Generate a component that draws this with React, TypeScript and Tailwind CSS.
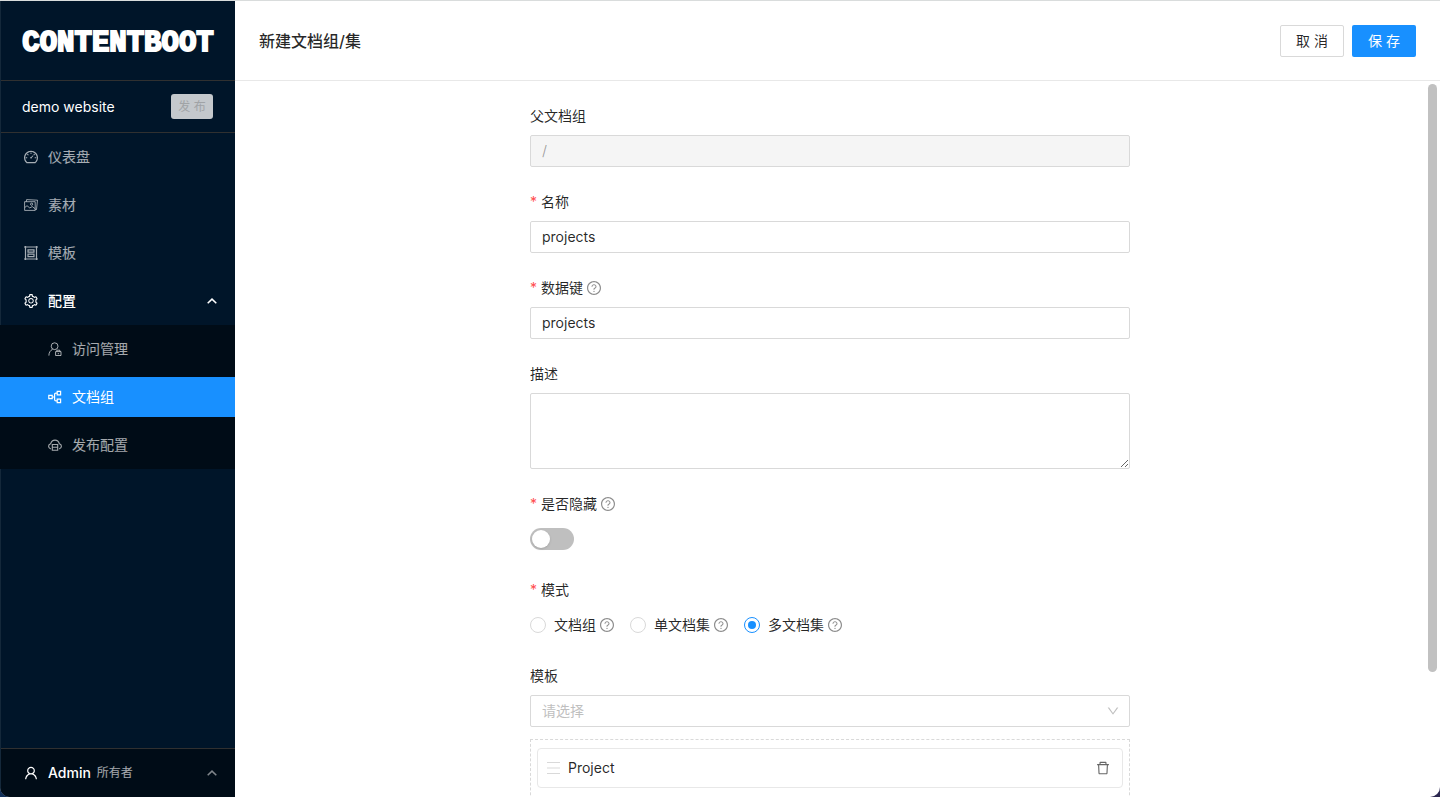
import { useState } from "react";
import type { ReactNode } from "react";
import {
  AiOutlineDashboard,
  AiOutlineDelete,
  AiOutlineDown,
  AiOutlineQuestionCircle,
  AiOutlineSetting,
  AiOutlineUser,
} from "react-icons/ai";

interface MenuItemProps {
  icon: ReactNode;
  label: string;
  nested?: boolean;
  active?: boolean;
}

interface FieldProps {
  label: string;
  htmlFor?: string;
  required?: boolean;
  help?: boolean;
  children: ReactNode;
}

const MODES = [
  { value: "group", label: "文档组" },
  { value: "single", label: "单文档集" },
  { value: "multiple", label: "多文档集" },
];

const INPUT_CLASS =
  "block h-8 w-full rounded-xs border border-[#d9d9d9] bg-white px-[11px] pb-px outline-none focus:border-[#40a9ff]";

function PicturesIcon() {
  return (
    <svg width="14" height="14" viewBox="0 0 14 14" fill="none" stroke="currentColor" strokeWidth="0.9" strokeLinejoin="round">
      <path d="M0.6 3.7h10.6v8.7H0.6z" />
      <path d="M2.3 3.6l.3-2 10.9.6-1 9.3-1.2.2" />
      <path d="M0.8 9.5l2.2-1.8 2.7 2.2 2.6-1.3 2.8 2.1" />
      <circle cx="7.6" cy="6.2" r="1.1" />
    </svg>
  );
}

function TemplateIcon() {
  return (
    <svg width="14" height="14" viewBox="0 0 14 14" fill="none" stroke="currentColor" strokeWidth="1.2">
      <path d="M1.5 0v14M12.5 0v14M0 1h14M0 13h14" />
      <path d="M4 3.8h6v2.4H4zM4 8.2h6v2.4H4z" />
    </svg>
  );
}

function AccessIcon() {
  return (
    <svg width="14" height="14" viewBox="0 0 14 14" fill="none" stroke="currentColor" strokeWidth="1">
      <circle cx="6.6" cy="4.2" r="3.4" />
      <path d="M0.9 13.6c0-3 1.4-5.2 3.6-6.3" />
      <path d="M7.6 9.6h5.4v3.9H7.6zM8.8 9.4V8.2h3v1.2M10.3 11v1.2" />
    </svg>
  );
}

function GroupIcon() {
  return (
    <svg width="14" height="14" viewBox="0 0 14 14" fill="none" stroke="currentColor" strokeWidth="1.2">
      <path d="M0.8 5.3h3.4v3.4H0.8zM9.2 1.4h3.4v3.4H9.2zM9.2 9.2h3.4v3.4H9.2z" />
      <path d="M4.2 7h2.4M9.2 3.1H7.9q-1.3 0-1.3 1.3v5.2q0 1.3 1.3 1.3h1.3" />
    </svg>
  );
}

function CloudIcon() {
  return (
    <svg width="14" height="14" viewBox="0 0 14 14" fill="none" stroke="currentColor" strokeWidth="1.1">
      <path d="M2.8 10.9C1.5 10.6.6 9.6.6 8.3c0-1.3.9-2.3 2.1-2.6C3.3 3.5 4.9 2.1 7 2.1s3.7 1.4 4.3 3.6c1.2.3 2.1 1.3 2.1 2.6s-.9 2.3-2.2 2.6" />
      <path d="M4.3 6.5h5.4v5.7H4.3zM4.3 9.3h5.4" />
    </svg>
  );
}

function ChevronUp({ className }: { className: string }) {
  return (
    <svg width="10" height="6" viewBox="0 0 10 6" fill="none" stroke="currentColor" strokeWidth="1.5" className={className}>
      <path d="M0.7 5.3L5 1.1l4.3 4.2" />
    </svg>
  );
}

function MenuItem({ icon, label, nested, active }: MenuItemProps) {
  return (
    <li>
      <a
        href="#"
        className={`flex h-10 items-center gap-[10px] ${nested ? "pl-12" : "pl-6"} ${
          active ? "bg-[#1890ff] text-white" : "text-white/65 hover:text-white"
        }`}
      >
        {icon}
        <span>{label}</span>
      </a>
    </li>
  );
}

function HelpIcon() {
  return <AiOutlineQuestionCircle size={16} className="-mr-px ml-[3px] text-black/45" />;
}

function Field({ label, htmlFor, required, help, children }: FieldProps) {
  return (
    <div className="mb-6">
      <div className="mb-2 flex h-[22px] items-center">
        {required && <span className="mr-1 w-[7px] text-[#ff4d4f]">*</span>}
        <label htmlFor={htmlFor}>{label}</label>
        {help && <HelpIcon />}
      </div>
      {children}
    </div>
  );
}

function Sidebar() {
  return (
    <aside className="flex w-[235px] shrink-0 flex-col border-l border-[#14283a] bg-[#001529] text-white">
      <div className="flex h-20 items-center justify-center border-b border-[#303030] pt-[6px]">
        <span className="font-['Liberation_Mono'] text-[29px] font-bold leading-none [-webkit-text-stroke:2px_white]">
          CONTENTBOOT
        </span>
      </div>

      <div className="flex h-[52px] items-center justify-between border-b border-[#303030] pl-[21px] pr-[22px]">
        <span>demo website</span>
        <button
          disabled
          className="h-[25px] w-[42px] rounded-[3px] bg-[#c4c8cc] text-xs text-[#a0a3a6]"
        >
          发 布
        </button>
      </div>

      <nav className="flex-1">
        <ul className="-ml-px flex flex-col gap-2 pt-1">
          <MenuItem icon={<AiOutlineDashboard size={16} className="-mx-px" />} label="仪表盘" />
          <MenuItem icon={<PicturesIcon />} label="素材" />
          <MenuItem icon={<TemplateIcon />} label="模板" />
          <li>
            <button className="mb-1 flex h-10 w-full items-center gap-[10px] pl-6 pr-[18px] font-medium">
              <AiOutlineSetting size={16} className="-mx-px" />
              <span>配置</span>
              <ChevronUp className="ml-auto" />
            </button>
            <ul className="flex flex-col gap-2 bg-[#000c17] py-1">
              <MenuItem nested icon={<AccessIcon />} label="访问管理" />
              <MenuItem nested active icon={<GroupIcon />} label="文档组" />
              <MenuItem nested icon={<CloudIcon />} label="发布配置" />
            </ul>
          </li>
        </ul>
      </nav>

      <button className="flex h-[49px] items-center border-t border-[#303030] bg-[#000c17] pl-[23px] pr-[18px]">
        <AiOutlineUser size={16} className="-mx-px" />
        <span className="ml-[10px] font-medium">Admin</span>
        <span className="ml-[6px] text-xs text-white/65">所有者</span>
        <ChevronUp className="ml-auto text-white/50" />
      </button>
    </aside>
  );
}

function TemplateSelect() {
  return (
    <>
      <div className="relative">
        <select id="template" defaultValue="" className={`${INPUT_CLASS} appearance-none text-[#bfbfbf]`}>
          <option value="">请选择</option>
          <option value="project">Project</option>
        </select>
        <AiOutlineDown
          size={14}
          className="pointer-events-none absolute right-[10px] top-[9px] text-[#bfbfbf]"
        />
      </div>
      <div className="mt-3 border border-dashed border-[#d9d9d9] px-[6px] pb-4 pt-2">
        <div className="flex h-10 items-center rounded border border-[#e8e8e8] pl-[9px] pr-[11px]">
          {/* drag handle */}
          <svg width="13" height="12" viewBox="0 0 13 12" stroke="#d9d9d9">
            <path d="M0 0.5h13M0 6h13M0 11.5h13" />
          </svg>
          <span className="ml-2">Project</span>
          <button aria-label="删除" className="ml-auto text-black/60">
            <AiOutlineDelete size={16} />
          </button>
        </div>
      </div>
    </>
  );
}

export default function App() {
  const [mode, setMode] = useState("multiple");
  const [hidden, setHidden] = useState(false);

  return (
    <div className="h-screen bg-linear-to-r from-[#12305a] to-[#2c2850] font-['Inter','Noto_Sans_CJK_SC',sans-serif] text-sm leading-[22px] text-black/85">
      <div className="flex h-full overflow-hidden rounded-b-[10px] border-t border-[#d9dcdc] bg-white">
        <Sidebar />

        <main className="flex min-w-0 flex-1 flex-col">
          <header className="flex h-20 shrink-0 items-center gap-2 border-b border-[#e8e8e8] px-6">
            <h1 className="mr-auto text-base font-medium">新建文档组/集</h1>
            <button className="h-8 w-16 rounded-xs border border-[#d9d9d9] bg-white">取 消</button>
            <button className="h-8 w-16 rounded-xs bg-[#1890ff] text-white">保 存</button>
          </header>

          <div className="flex min-h-0 flex-1">
            <div className="min-w-0 flex-1 overflow-y-auto pt-6 [scrollbar-width:none]">
              <form className="mx-auto w-full max-w-[600px]">
                <Field label="父文档组" htmlFor="parent">
                  <input
                    id="parent"
                    disabled
                    defaultValue="/"
                    className="block h-8 w-full rounded-xs border border-[#d9d9d9] bg-[#f5f5f5] px-[11px] pb-px text-black/35"
                  />
                </Field>
                <Field label="名称" htmlFor="name" required>
                  <input id="name" defaultValue="projects" className={INPUT_CLASS} />
                </Field>
                <Field label="数据键" htmlFor="key" required help>
                  <input id="key" defaultValue="projects" className={INPUT_CLASS} />
                </Field>
                <Field label="描述" htmlFor="description">
                  <textarea
                    id="description"
                    className="block h-[76px] w-full resize-y rounded-xs border border-[#d9d9d9] px-[11px] py-1 outline-none"
                  />
                </Field>
                <Field label="是否隐藏" htmlFor="hidden" required help>
                  <div className="flex h-8 items-center">
                    <input
                      id="hidden"
                      type="checkbox"
                      role="switch"
                      checked={hidden}
                      onChange={(e) => setHidden(e.target.checked)}
                      className="h-[22px] w-11 appearance-none rounded-full bg-[#bfbfbf] p-[2px] before:block before:size-[18px] before:rounded-full before:bg-white before:shadow-sm checked:bg-[#1890ff] checked:before:ml-[22px]"
                    />
                  </div>
                </Field>
                <Field label="模式" required>
                  <div className="flex h-8 items-center gap-4">
                    {MODES.map((item) => (
                      <div key={item.value} className="flex items-center">
                        <input
                          id={item.value}
                          type="radio"
                          name="mode"
                          checked={mode === item.value}
                          onChange={() => setMode(item.value)}
                          className="mr-2 flex size-4 appearance-none items-center justify-center rounded-full border border-[#d9d9d9] before:size-2 before:rounded-full checked:border-[#1890ff] checked:before:bg-[#1890ff]"
                        />
                        <label htmlFor={item.value}>{item.label}</label>
                        <HelpIcon />
                      </div>
                    ))}
                  </div>
                </Field>
                <Field label="模板" htmlFor="template">
                  <TemplateSelect />
                </Field>
              </form>
            </div>

            {/* scrollbar */}
            <div className="w-[15px] shrink-0 pl-[3px] pt-[3px]">
              <div className="h-[82.5%] w-[9px] rounded-full bg-[#c1c1c1]" />
            </div>
          </div>
        </main>
      </div>
    </div>
  );
}
